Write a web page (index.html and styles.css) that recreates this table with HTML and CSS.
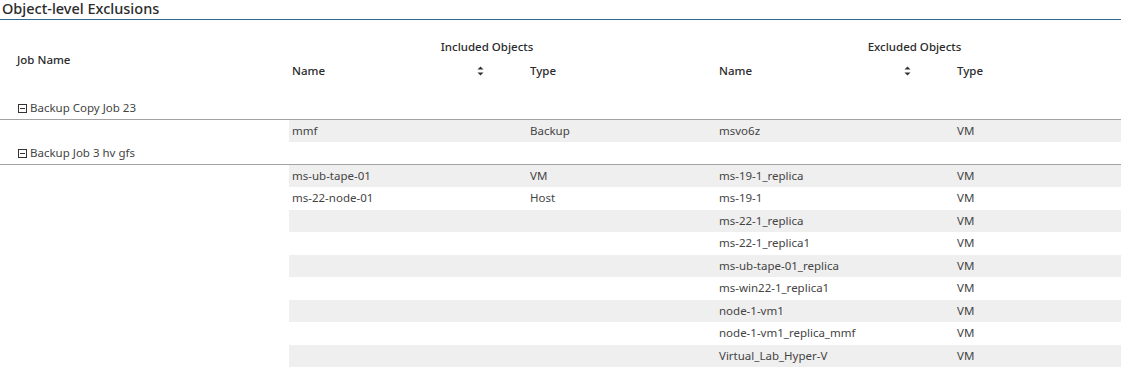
FILE: index.html
```html
<!DOCTYPE html>
<html lang="en">
<head>
  <meta charset="UTF-8" />
  <title>Object-level Exclusions</title>
  <link rel="stylesheet" href="styles.css">
</head>
<body>

  <div class="report">
    <h1 class="report-title">Object-level Exclusions</h1>

    <table class="grid">
      <colgroup>
        <col class="c-job">
        <col class="c-name">
        <col class="c-type">
        <col class="c-name">
        <col class="c-type2">
      </colgroup>
      <thead>
        <tr class="head-top">
          <th rowspan="2" class="job-head">Job Name</th>
          <th colspan="2" class="group-head inc">Included Objects</th>
          <th colspan="2" class="group-head exc">Excluded Objects</th>
        </tr>
        <tr class="head-sub">
          <th><span class="sortable">Name <svg class="sort" width="7" height="10" viewBox="0 0 7 10"><path d="M3.5 0.5 L6.5 3.5 L0.5 3.5 Z" fill="#333"/><path d="M0.5 6.5 L6.5 6.5 L3.5 9.5 Z" fill="#333"/></svg></span></th>
          <th>Type</th>
          <th><span class="sortable">Name <svg class="sort" width="7" height="10" viewBox="0 0 7 10"><path d="M3.5 0.5 L6.5 3.5 L0.5 3.5 Z" fill="#333"/><path d="M0.5 6.5 L6.5 6.5 L3.5 9.5 Z" fill="#333"/></svg></span></th>
          <th>Type</th>
        </tr>
      </thead>

      <tbody>
        <tr class="job-row">
          <td colspan="5"><span class="toggle"></span>Backup Copy Job 23</td>
        </tr>
        <tr class="odd">
          <td class="blank"></td><td>mmf</td><td>Backup</td><td>msvo6z</td><td>VM</td>
        </tr>
      </tbody>

      <tbody>
        <tr class="job-row">
          <td colspan="5"><span class="toggle"></span>Backup Job 3 hv gfs</td>
        </tr>
        <tr class="odd">
          <td class="blank"></td><td>ms-ub-tape-01</td><td>VM</td><td>ms-19-1_replica</td><td>VM</td>
        </tr>
        <tr>
          <td class="blank"></td><td>ms-22-node-01</td><td>Host</td><td>ms-19-1</td><td>VM</td>
        </tr>
        <tr class="odd">
          <td class="blank"></td><td></td><td></td><td>ms-22-1_replica</td><td>VM</td>
        </tr>
        <tr>
          <td class="blank"></td><td></td><td></td><td>ms-22-1_replica1</td><td>VM</td>
        </tr>
        <tr class="odd">
          <td class="blank"></td><td></td><td></td><td>ms-ub-tape-01_replica</td><td>VM</td>
        </tr>
        <tr>
          <td class="blank"></td><td></td><td></td><td>ms-win22-1_replica1</td><td>VM</td>
        </tr>
        <tr class="odd">
          <td class="blank"></td><td></td><td></td><td>node-1-vm1</td><td>VM</td>
        </tr>
        <tr>
          <td class="blank"></td><td></td><td></td><td>node-1-vm1_replica_mmf</td><td>VM</td>
        </tr>
        <tr class="odd">
          <td class="blank"></td><td></td><td></td><td>Virtual_Lab_Hyper-V</td><td>VM</td>
        </tr>
      </tbody>
    </table>
  </div>

</body>
</html>
```

FILE: styles.css
```css
html, body {
  margin: 0;
  padding: 0;
  background: #fff;
  font-family: 'Segoe UI', 'Noto Sans', 'Open Sans', sans-serif;
  color: #444;
  overflow: hidden;
}

.report {
  width: 1121px;
}

.report-title {
  margin: 0;
  padding: 0 0 0 2px;
  height: 19px;
  line-height: 17px;
  font-size: 14.5px;
  font-weight: 500;
  color: #2b2b2b;
  border-bottom: 1px solid #2f6890;
}

.grid {
  width: 1121px;
  border-collapse: collapse;
  table-layout: fixed;
  font-size: 11.5px;
}

.c-job { width: 289px; }
.c-name { width: 238px; }
.c-type { width: 189px; }
.c-type2 { width: 167px; }

th {
  font-weight: 500;
  color: #2b2b2b;
  text-align: left;
  padding: 0 3px;
}

.head-top th {
  height: 35px;
  vertical-align: bottom;
  padding-bottom: 3px;
  line-height: 16px;
}

.head-top .job-head {
  vertical-align: top;
  padding: 32px 0 0 17px;
}

.group-head {
  text-align: center;
}

.group-head.inc { padding-right: 34px; }
.group-head.exc { padding-right: 11px; }

.head-sub th {
  height: 34px;
  vertical-align: top;
  padding-top: 5px;
  line-height: 16px;
}

.sortable {
  display: flex;
  align-items: center;
  justify-content: space-between;
  width: 192px;
}

.sort {
  display: block;
}

td {
  height: 22.5px;
  padding: 0 3px;
  line-height: 16px;
  white-space: nowrap;
  vertical-align: middle;
}

.job-row td {
  height: 21.5px;
  padding-left: 18px;
  border-bottom: 1px solid #a3a3a3;
  color: #444;
}

.toggle {
  display: inline-block;
  position: relative;
  width: 7px;
  height: 7px;
  border: 1px solid #333;
  margin-right: 3px;
  vertical-align: -1px;
}

.toggle::after {
  content: "";
  position: absolute;
  left: 1px;
  right: 1px;
  top: 3px;
  height: 1px;
  background: #333;
}

tr.odd td {
  background: #efefef;
}

tr.odd td.blank {
  background: #fff;
}
```
